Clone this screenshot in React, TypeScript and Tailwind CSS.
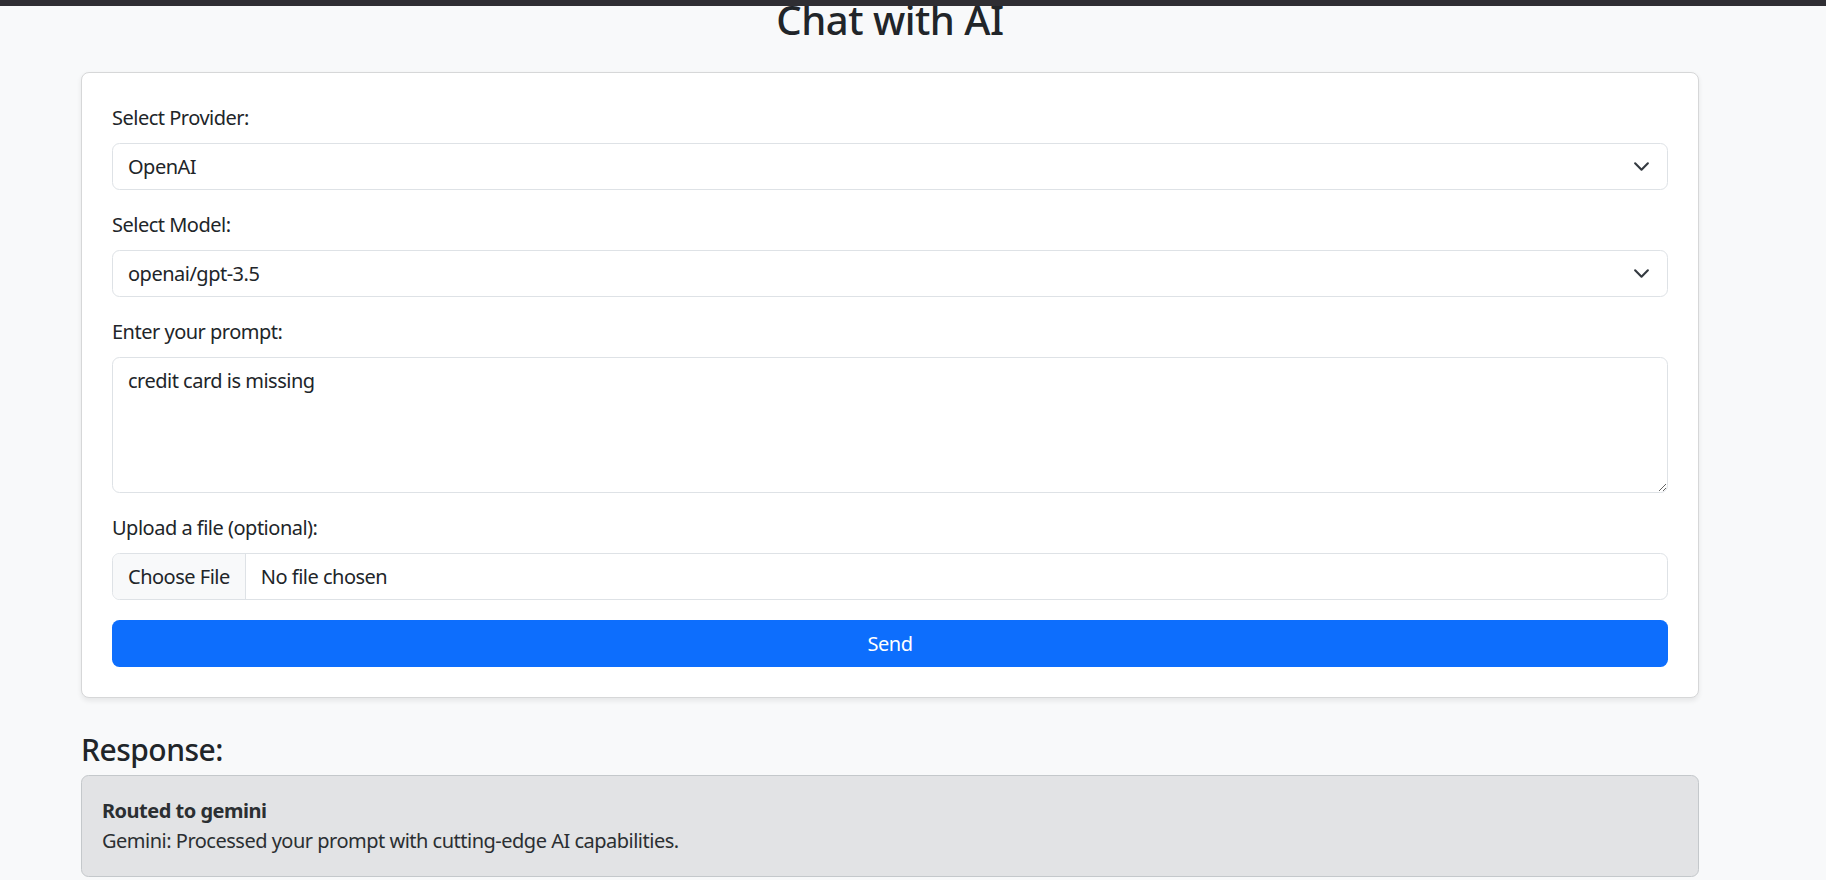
import React from 'react';

function Chevron() {
    return (
        <svg width="17" height="17" viewBox="0 0 16 16" fill="none" className="mr-[2px] shrink-0">
            <path d="M2 5l6 6 6-6" stroke="#343a40" strokeWidth="2" strokeLinecap="round" strokeLinejoin="round" />
        </svg>
    );
}

function SelectBox({ value }: { value: string }) {
    return (
        <div className="flex h-[47px] items-center justify-between rounded-[7.5px] border border-[#dee2e6] bg-white pl-[15px] pr-[15px]">
            <span>{value}</span>
            <Chevron />
        </div>
    );
}

export default function App() {
    return (
        <div
            className="min-h-screen bg-[#f8f9fa] text-[20px] leading-[30px] tracking-[-0.025em] text-[#212529]"
            style={{ fontFamily: '"Noto Sans", "Open Sans", Arial, sans-serif' }}
        >
            <div className="relative z-10 h-[6px] bg-[#2f2e33]"></div>

            <main className="ml-[81px] w-[1618px]">
                <h2 className="-mt-[10px] mb-[28px] text-center text-[40px] font-medium leading-[48px]">Chat with AI</h2>

                {/* Form card */}
                <div className="rounded-[8px] border border-[#d6d7d8] bg-white p-[30px] shadow-[0_2.5px_5px_rgba(0,0,0,0.075)]">
                    <label className="mb-[10px] block">Select Provider:</label>
                    <div className="mb-[20px]">
                        <SelectBox value="OpenAI" />
                    </div>

                    <label className="mb-[10px] block">Select Model:</label>
                    <div className="mb-[20px]">
                        <SelectBox value="openai/gpt-3.5" />
                    </div>

                    <label className="mb-[10px] block">Enter your prompt:</label>
                    <textarea
                        className="mb-[20px] block h-[136px] w-full resize-y rounded-[7.5px] border border-[#dee2e6] bg-white px-[15px] py-[7.5px] tracking-[-0.025em] outline-none"
                        defaultValue="credit card is missing"
                    />

                    <label className="mb-[10px] block">Upload a file (optional):</label>
                    <div className="mb-[20px] flex h-[47px] items-stretch overflow-hidden rounded-[7.5px] border border-[#dee2e6] bg-white">
                        <div className="flex items-center border-r border-[#dee2e6] bg-[#f8f9fa] px-[15px]">Choose File</div>
                        <div className="flex items-center pl-[15px]">No file chosen</div>
                    </div>

                    <button className="flex h-[47px] w-full items-center justify-center rounded-[7.5px] bg-[#0d6efd] text-white">
                        Send
                    </button>
                </div>

                <h4 className="mb-[7px] mt-[34px] text-[30px] font-medium leading-[36px]">Response:</h4>
                <div className="rounded-[7.5px] border border-[#c4c8cb] bg-[#e2e3e5] p-[20px] text-[#2b2f32]">
                    <div className="font-bold">Routed to gemini</div>
                    <div>Gemini: Processed your prompt with cutting-edge AI capabilities.</div>
                </div>
            </main>
        </div>
    );
}
